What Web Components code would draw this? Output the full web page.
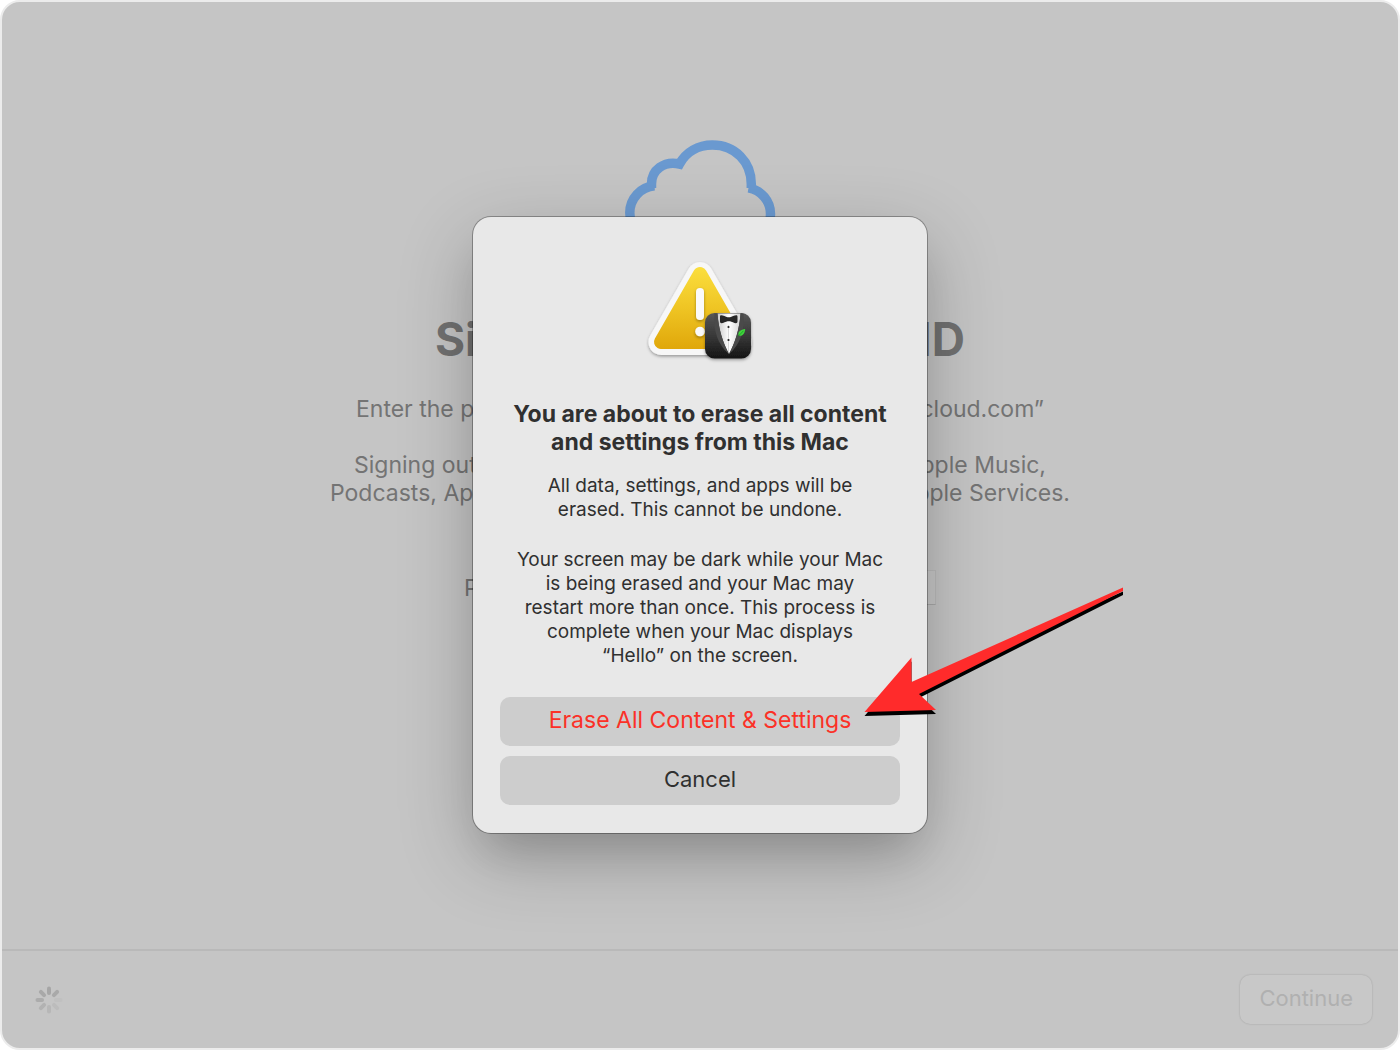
<!DOCTYPE html>
<html lang="en">
<head>
<meta charset="utf-8">
<meta name="viewport" content="width=device-width, initial-scale=1">
<title>Erase Assistant</title>
<style>
    body {
        margin: 0;
        background: #fff;
        color: #303030;
        font-family: Inter, "Liberation Sans", sans-serif;
    }
</style>
</head>
<body>
<assistant-window>
    <sign-out-page></sign-out-page>
    <activity-spinner slot="status"></activity-spinner>
    <push-button slot="action" kind="disabled">Continue</push-button>
    <alert-dialog slot="sheet">
        <warning-icon slot="icon"></warning-icon>
        <span slot="title">You are about to erase all content<br>and settings from this Mac</span>
        <alert-text>All data, settings, and apps will be<br>erased. This cannot be undone.</alert-text>
        <alert-text>Your screen may be dark while your Mac<br>is being erased and your Mac may<br>restart more than once. This process is<br>complete when your Mac displays<br>“Hello” on the screen.</alert-text>
        <push-button slot="buttons" kind="destructive">Erase All Content &amp; Settings</push-button>
        <push-button slot="buttons">Cancel</push-button>
        <pointer-arrow slot="pointer"></pointer-arrow>
    </alert-dialog>
</assistant-window>

<script>
// small base class, every element only gives its own markup
class BaseElement extends HTMLElement {
    constructor() {
        super()
        this.root = this.attachShadow({ mode: 'open' })
        this.root.innerHTML = this.render()
    }
}

// the window: page area, footer bar and a sheet over both
class AssistantWindow extends BaseElement {
    render() {
        return `
            <style>
                :host {
                    position: relative;
                    display: flex;
                    flex-direction: column;
                    box-sizing: border-box;
                    min-height: 100vh;
                    border: 2px solid #ececec;
                    border-radius: 20px;
                    background: #c5c5c5;
                    overflow: hidden;
                }

                main {
                    flex: 1;
                }

                footer {
                    display: flex;
                    align-items: center;
                    justify-content: space-between;
                    height: 97px;
                    padding: 0 26px 0 32px;
                    border-top: 2px solid #b9b9b9;
                }

                .sheet {
                    position: absolute;
                    inset: 0;
                    display: grid;
                    place-items: center;
                }
            </style>
            <main><slot></slot></main>
            <footer>
                <slot name="status"></slot>
                <slot name="action"></slot>
            </footer>
            <div class="sheet"><slot name="sheet"></slot></div>
        `
    }
}

// dimmed page that stays behind the sheet
class SignOutPage extends BaseElement {
    render() {
        return `
            <style>
                :host {
                    display: flex;
                    flex-direction: column;
                    align-items: center;
                    padding-top: 132px;
                    color: #747474;
                    font-size: 23px;
                    line-height: 28px;
                }

                h1 {
                    width: 530px;
                    margin: 19px 0 28px;
                    color: #717171;
                    font-size: 46px;
                    font-weight: 700;
                    line-height: 56px;
                }

                h1, p {
                    display: flex;
                    justify-content: space-between;
                    white-space: nowrap;
                }

                p {
                    width: 692px;
                    margin: 0;
                }

                .account {
                    width: 688px;
                    margin-bottom: 28px;
                }

                .wide {
                    width: 740px;
                }

                form {
                    display: flex;
                    align-items: center;
                    justify-content: space-between;
                    width: 472px;
                    margin-top: 63px;
                }

                input {
                    box-sizing: border-box;
                    width: 340px;
                    height: 35px;
                    border: 1px solid #bcbcbc;
                    border-bottom-color: #aaa;
                    background: #c9c9c9;
                }
            </style>
            <svg width="160" height="158" viewBox="620 134 160 158" fill="none" stroke="#6a99d0" stroke-width="9.5" aria-hidden="true">
                <path d="M654.500 185.800A27 27 0 0 0 629.800 212.700C629.800 232 643 243 660 243H742C760 243 770.500 231 770.500 214A26.500 26.500 0 0 0 748.500 187.900"/>
                <path d="M651.500 188V184C651.500 170 664 160.500 679.500 164C686 152 698 145 712.500 145C735 145 751.300 162 751.300 184V188"/>
            </svg>
            <h1><span>Sign</span><span>ID</span></h1>
            <p class="account"><span>Enter the pass</span><span>cloud.com”</span></p>
            <p><span>Signing out</span><span>Apple Music,</span></p>
            <p class="wide"><span>Podcasts, App</span><span>Apple Services.</span></p>
            <form>
                <label for="password">Pass</label>
                <input id="password" type="password">
            </form>
        `
    }
}

class ActivitySpinner extends BaseElement {
    render() {
        const shades = ['#a6a6a6', '#a9a9a9', '#c0c0c0', '#bcbcbc', '#b7b7b7', '#b2b2b2', '#acacac', '#a8a8a8']
        const blades = shades.map((shade, i) =>
            `<path d="M15 3.500V8" stroke="${shade}" transform="rotate(${i * 45} 15 15)"/>`).join('')
        return `
            <style>
                :host, svg {
                    display: block;
                }
            </style>
            <svg width="30" height="30" viewBox="0 0 30 30" stroke-width="4" stroke-linecap="round" role="img" aria-label="Loading">${blades}</svg>
        `
    }
}

class PushButton extends BaseElement {
    render() {
        return `
            <style>
                :host {
                    display: block;
                }

                button {
                    box-sizing: border-box;
                    width: 100%;
                    height: 49px;
                    padding: 0 19px 3px;
                    border: 0;
                    border-radius: 10px;
                    background: #cdcdcd;
                    color: #303030;
                    font: inherit;
                    font-size: 22px;
                    line-height: 28px;
                }

                :host([kind="destructive"]) button {
                    color: #fb3127;
                    font-size: 23px;
                }

                :host([kind="disabled"]) button {
                    background: #c8c8c8;
                    box-shadow: 0 0 2px rgba(0, 0, 0, .2);
                    color: #b0b0b0;
                }
            </style>
            <button type="button"><slot></slot></button>
        `
    }

    connectedCallback() {
        this.root.querySelector('button').disabled = this.getAttribute('kind') === 'disabled'
    }
}

class AlertDialog extends BaseElement {
    render() {
        return `
            <style>
                :host {
                    position: relative;
                    display: block;
                }

                section {
                    display: flex;
                    flex-direction: column;
                    box-sizing: border-box;
                    width: 454px;
                    padding: 28px 27px;
                    border-radius: 18px;
                    background: #e8e8e8;
                    box-shadow: 0 0 0 1px rgba(0, 0, 0, .3), 0 24px 76px rgba(0, 0, 0, .24), 0 28px 40px -14px rgba(0, 0, 0, .12);
                    text-align: center;
                }

                h2 {
                    margin: 25px 0 18px;
                    font-size: 23px;
                    font-weight: 700;
                    line-height: 28px;
                    white-space: nowrap;
                }

                .message {
                    display: grid;
                    gap: 26px;
                }

                .buttons {
                    display: grid;
                    gap: 10px;
                    margin-top: 29px;
                }
            </style>
            <section role="alertdialog" aria-labelledby="title">
                <slot name="icon"></slot>
                <h2 id="title"><slot name="title"></slot></h2>
                <div class="message"><slot></slot></div>
                <div class="buttons"><slot name="buttons"></slot></div>
            </section>
            <slot name="pointer"></slot>
        `
    }
}

class AlertText extends BaseElement {
    render() {
        return `
            <style>
                :host {
                    display: block;
                    font-size: 19px;
                    line-height: 24px;
                    white-space: nowrap;
                }
            </style>
            <slot></slot>
        `
    }
}

// caution triangle with the tuxedo badge in its corner
class WarningIcon extends BaseElement {
    render() {
        return `
            <style>
                :host {
                    display: flex;
                    justify-content: center;
                }
            </style>
            <svg width="120" height="130" viewBox="640 245 120 130" aria-hidden="true">
                <defs>
                    <linearGradient id="yellow" gradientUnits="userSpaceOnUse" x1="0" y1="266" x2="0" y2="349">
                        <stop offset="0" stop-color="#fbdf3e"/>
                        <stop offset=".5" stop-color="#efc524"/>
                        <stop offset="1" stop-color="#e0a70a"/>
                    </linearGradient>
                    <linearGradient id="suit" x1="0" y1="0" x2="0" y2="1">
                        <stop offset="0" stop-color="#575757"/>
                        <stop offset=".5" stop-color="#383838"/>
                        <stop offset="1" stop-color="#151515"/>
                    </linearGradient>
                    <linearGradient id="shirt" x1="0" y1="0" x2="1" y2="0">
                        <stop offset="0" stop-color="#c9c9c9"/>
                        <stop offset=".5" stop-color="#fff"/>
                        <stop offset="1" stop-color="#d5d5d5"/>
                    </linearGradient>
                    <filter id="drop" x="-20%" y="-20%" width="140%" height="150%">
                        <feDropShadow dx="0" dy="1.500" stdDeviation="1.500" flood-opacity=".35"/>
                    </filter>
                </defs>
                <path d="M700 275L661.500 342H738.500Z" fill="#f7f7f7" stroke="#f7f7f7" stroke-width="26" stroke-linejoin="round" filter="url(#drop)"/>
                <path d="M700 274L661 342H739Z" fill="url(#yellow)" stroke="url(#yellow)" stroke-width="14" stroke-linejoin="round"/>
                <g fill="#fafafa" filter="url(#drop)">
                    <rect x="696" y="288" width="8" height="32" rx="4"/>
                    <circle cx="700" cy="331.500" r="4.800"/>
                </g>
                <rect x="705" y="313" width="46" height="45.500" rx="9.500" fill="url(#suit)" filter="url(#drop)"/>
                <path d="M717.500 313.500H740.500C739.500 329 735 343 729 354C723 343 718.500 329 717.500 313.500Z" fill="url(#shirt)"/>
                <path d="M717.500 313.500C718.500 329 723 343 729 354C718 345 713 331 714.500 313.500M740.500 313.500C739.500 329 735 343 729 354C740 345 745 331 743.500 313.500" fill="#4a4a4a"/>
                <path d="M728.500 325V352" stroke="#c8c8c8" stroke-width=".7"/>
                <path d="M720 316.500C720 313.800 725 316.500 727.500 317.200H730C732.500 316.500 737.500 313.800 737.500 316.500V321.500C737.500 325 732.500 322 730 321.300H727.500C725 322 720 325 720 321.500Z" fill="#272727"/>
                <circle cx="728.500" cy="327" r="1.100" fill="#222"/>
                <circle cx="728.500" cy="340" r="1.100" fill="#222"/>
                <path d="M738.500 335.500C737.500 331.500 741 329.500 745.200 329C745 333 742.500 337 738.500 335.500Z" fill="#3fd53c"/>
                <path d="M738 336.500L743.500 330.800" stroke="#188c20" stroke-width=".7"/>
            </svg>
        `
    }
}

// red annotation arrow, its tip lies on the first button
class PointerArrow extends BaseElement {
    render() {
        return `
            <style>
                :host {
                    position: absolute;
                    top: 363px;
                    left: 387px;
                    pointer-events: none;
                }

                svg {
                    display: block;
                }
            </style>
            <svg width="270" height="142" viewBox="860 580 270 142" aria-hidden="true">
                <defs>
                    <path id="arrow" d="M864.500 712L911.500 657.500V682L1123 587.500V591L919 694L936 710Z"/>
                </defs>
                <use href="#arrow" y="4"/>
                <use href="#arrow" fill="#ff2b2b"/>
            </svg>
        `
    }
}

customElements.define('assistant-window', AssistantWindow)
customElements.define('sign-out-page', SignOutPage)
customElements.define('activity-spinner', ActivitySpinner)
customElements.define('push-button', PushButton)
customElements.define('alert-dialog', AlertDialog)
customElements.define('alert-text', AlertText)
customElements.define('warning-icon', WarningIcon)
customElements.define('pointer-arrow', PointerArrow)
</script>
</body>
</html>
